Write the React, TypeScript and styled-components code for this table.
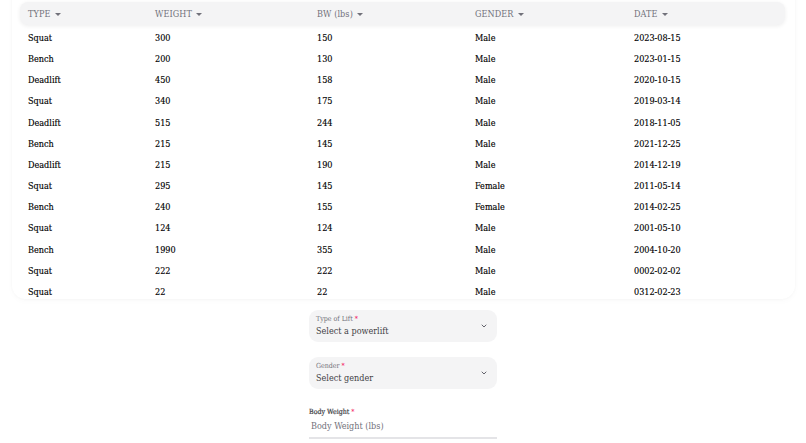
import React from "react";
import styled, { createGlobalStyle } from "styled-components";

const Global = createGlobalStyle`
  html, body { margin: 0; padding: 0; background: #fff; overflow: hidden; }
  body { font-family: "DejaVu Serif Condensed", "DejaVu Serif", serif; }
  * { box-sizing: border-box; }
`;

const Page = styled.div`
  width: 806px;
  height: 443px;
  display: flex;
  flex-direction: column;
  align-items: center;
`;

const Wrapper = styled.div`
  width: 783px;
  margin-top: -14px;
  padding: 16px 10px 0 8px;
  border-radius: 14px;
  box-shadow: 0 0 3px rgba(0, 0, 0, 0.035), 0 2px 6px rgba(0, 0, 0, 0.025);
  align-self: flex-start;
  margin-left: 12px;
  height: 313px;
`;

const cols = "127px 162px 158px 159px 1fr";

const HeaderRow = styled.div`
  display: grid;
  grid-template-columns: ${cols};
  height: 23px;
  align-items: center;
  background: #f4f4f5;
  border-radius: 8px;
  box-shadow: 0 1px 4px rgba(0, 0, 0, 0.07);
  margin-bottom: 2.4px;
`;

const HeadCell = styled.div`
  padding-left: 8px;
  font-size: 9px;
  color: #71717a;
  display: flex;
  align-items: center;
  gap: 4px;
  letter-spacing: 0.1px;
`;

const Caret = styled.span`
  width: 0;
  height: 0;
  border-left: 3px solid transparent;
  border-right: 3px solid transparent;
  border-top: 3px solid #71717a;
  margin-top: 1px;
`;

const Row = styled.div`
  display: grid;
  grid-template-columns: ${cols};
  height: 21.17px;
  align-items: center;
`;

const Cell = styled.div`
  padding-left: 8px;
  font-size: 9px;
  color: #000;
  -webkit-text-stroke: 0.15px #000;
`;

const Form = styled.div`
  margin-top: 11px;
  width: 188px;
  display: flex;
  flex-direction: column;
  gap: 15px;
`;

const SelectBox = styled.div`
  height: 32px;
  border-radius: 9px;
  background: #f4f4f5;
  display: flex;
  align-items: center;
  justify-content: space-between;
  padding: 0 10px 0 7px;
`;

const SelectText = styled.div`
  display: flex;
  flex-direction: column;
  gap: 1px;
`;

const Label = styled.div<{ $dark?: boolean }>`
  font-size: 7px;
  line-height: 9px;
  color: ${(p) => (p.$dark ? "#3f3f46" : "#71717a")};
  -webkit-text-stroke: ${(p) => (p.$dark ? "0.2px #3f3f46" : "0")};
`;

const Star = styled.span`
  color: #f31260;
  margin-left: 2px;
  -webkit-text-stroke: 0;
`;

const Value = styled.div`
  font-size: 9px;
  line-height: 12px;
  color: #3f3f46;
`;

const TextField = styled.div`
  display: flex;
  flex-direction: column;
  gap: 3px;
  padding-top: 4px;
`;

const Input = styled.div`
  font-size: 9px;
  line-height: 12px;
  color: #71717a;
  padding: 0 2px 5px;
  border-bottom: 2px solid #e4e4e7;
`;

const Chevron = () => (
  <svg width="6" height="4" viewBox="0 0 6 4" fill="none">
    <path d="M1 1l2 2 2-2" stroke="#52525b" strokeWidth="0.9" strokeLinecap="round" strokeLinejoin="round" />
  </svg>
);

const data: [string, string, string, string, string][] = [
  ["Squat", "300", "150", "Male", "2023-08-15"],
  ["Bench", "200", "130", "Male", "2023-01-15"],
  ["Deadlift", "450", "158", "Male", "2020-10-15"],
  ["Squat", "340", "175", "Male", "2019-03-14"],
  ["Deadlift", "515", "244", "Male", "2018-11-05"],
  ["Bench", "215", "145", "Male", "2021-12-25"],
  ["Deadlift", "215", "190", "Male", "2014-12-19"],
  ["Squat", "295", "145", "Female", "2011-05-14"],
  ["Bench", "240", "155", "Female", "2014-02-25"],
  ["Squat", "124", "124", "Male", "2001-05-10"],
  ["Bench", "1990", "355", "Male", "2004-10-20"],
  ["Squat", "222", "222", "Male", "0002-02-02"],
  ["Squat", "22", "22", "Male", "0312-02-23"],
];

const headers = ["TYPE", "WEIGHT", "BW (lbs)", "GENDER", "DATE"];

export default function App() {
  return (
    <>
      <Global />
      <Page>
        <Wrapper>
          <HeaderRow>
            {headers.map((h) => (
              <HeadCell key={h}>
                {h}
                <Caret />
              </HeadCell>
            ))}
          </HeaderRow>
          {data.map((r, i) => (
            <Row key={i}>
              {r.map((c, j) => (
                <Cell key={j}>{c}</Cell>
              ))}
            </Row>
          ))}
        </Wrapper>
        <Form>
          <SelectBox>
            <SelectText>
              <Label>
                Type of Lift<Star>*</Star>
              </Label>
              <Value>Select a powerlift</Value>
            </SelectText>
            <Chevron />
          </SelectBox>
          <SelectBox>
            <SelectText>
              <Label>
                Gender<Star>*</Star>
              </Label>
              <Value>Select gender</Value>
            </SelectText>
            <Chevron />
          </SelectBox>
          <TextField>
            <Label $dark>
              Body Weight<Star>*</Star>
            </Label>
            <Input>Body Weight (lbs)</Input>
          </TextField>
        </Form>
      </Page>
    </>
  );
}
